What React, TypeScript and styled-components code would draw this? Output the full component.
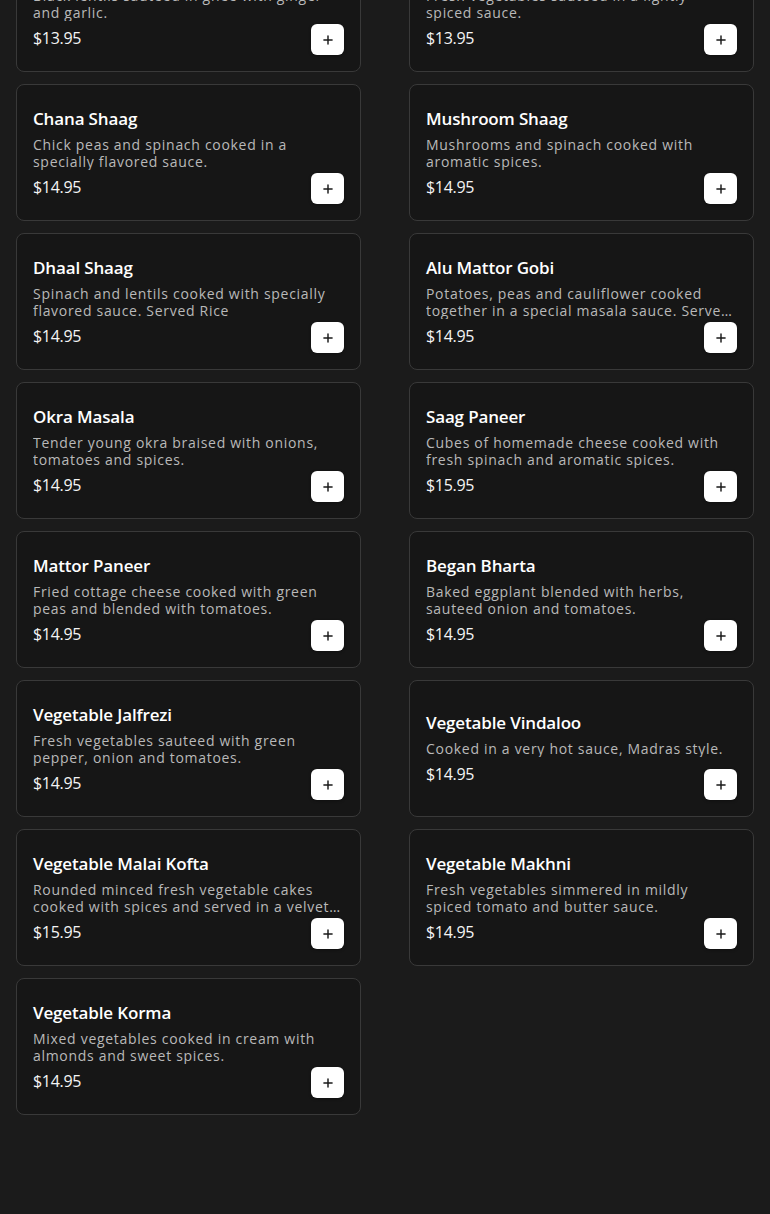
import React, { useLayoutEffect, useRef } from "react";
import styled, { createGlobalStyle } from "styled-components";
import { Plus } from "lucide-react";

const GlobalStyle = createGlobalStyle`
    * { box-sizing: border-box; }
    html, body { margin: 0; padding: 0; background: #1b1b1b; }
    body { font-family: "Open Sans", "Liberation Sans", sans-serif; color: #fff; }
`;

type Dish = { name: string; description: string; price: string };

const dishes: Dish[] = [
    { name: "Dhaal Makhni", description: "Black lentils sauteed in ghee with ginger and garlic.", price: "$13.95" },
    { name: "Mixed Vegetable Curry", description: "Fresh vegetables sauteed in a lightly spiced sauce.", price: "$13.95" },
    { name: "Chana Shaag", description: "Chick peas and spinach cooked in a specially flavored sauce.", price: "$14.95" },
    { name: "Mushroom Shaag", description: "Mushrooms and spinach cooked with aromatic spices.", price: "$14.95" },
    { name: "Dhaal Shaag", description: "Spinach and lentils cooked with specially flavored sauce. Served Rice", price: "$14.95" },
    { name: "Alu Mattor Gobi", description: "Potatoes, peas and cauliflower cooked together in a special masala sauce. Served with rice.", price: "$14.95" },
    { name: "Okra Masala", description: "Tender young okra braised with onions, tomatoes and spices.", price: "$14.95" },
    { name: "Saag Paneer", description: "Cubes of homemade cheese cooked with fresh spinach and aromatic spices.", price: "$15.95" },
    { name: "Mattor Paneer", description: "Fried cottage cheese cooked with green peas and blended with tomatoes.", price: "$14.95" },
    { name: "Began Bharta", description: "Baked eggplant blended with herbs, sauteed onion and tomatoes.", price: "$14.95" },
    { name: "Vegetable Jalfrezi", description: "Fresh vegetables sauteed with green pepper, onion and tomatoes.", price: "$14.95" },
    { name: "Vegetable Vindaloo", description: "Cooked in a very hot sauce, Madras style.", price: "$14.95" },
    { name: "Vegetable Malai Kofta", description: "Rounded minced fresh vegetable cakes cooked with spices and served in a velvety cream sauce.", price: "$15.95" },
    { name: "Vegetable Makhni", description: "Fresh vegetables simmered in mildly spiced tomato and butter sauce.", price: "$14.95" },
    { name: "Vegetable Korma", description: "Mixed vegetables cooked in cream with almonds and sweet spices.", price: "$14.95" },
];

// the menu is shown scrolled part way into the list
const SCROLL_INTO_GRID = 65;

const Viewport = styled.div`
    height: 100vh;
    overflow: hidden;
`;

const Section = styled.section`
    padding: 24px 16px 100px;
`;

const SectionTitle = styled.h2`
    margin: 0 0 20px;
    font-size: 24px;
    line-height: 32px;
    font-weight: 600;
`;

const Grid = styled.div`
    display: grid;
    grid-template-columns: 1fr 1fr;
    column-gap: 48px;
    row-gap: 12px;
`;

const Card = styled.div`
    display: grid;
    height: 137px;
    padding: 16px;
    background: #161616;
    border: 1px solid #393939;
    border-radius: 8px;
`;

const Info = styled.div`
    grid-area: 1 / 1;
    align-self: center;
    display: flex;
    flex-direction: column;
`;

const Name = styled.h3`
    margin: 0 0 7px;
    font-size: 17px;
    line-height: 20px;
    font-weight: 600;
    letter-spacing: -0.15px;
    color: #fff;
`;

const Description = styled.p`
    margin: 0 0 7px;
    font-size: 14px;
    line-height: 17px;
    font-weight: 400;
    letter-spacing: 0.7px;
    color: #b9b9b9;
    display: -webkit-box;
    -webkit-line-clamp: 2;
    -webkit-box-orient: vertical;
    overflow: hidden;
`;

const Price = styled.span`
    font-size: 16px;
    line-height: 20px;
    letter-spacing: -0.3px;
    color: #f4f4f4;
`;

const AddButton = styled.button`
    grid-area: 1 / 1;
    align-self: end;
    justify-self: end;
    width: 33px;
    height: 31px;
    display: flex;
    align-items: center;
    justify-content: center;
    padding: 0;
    border: none;
    border-radius: 6px;
    background: #fff;
    color: #1a1a1a;
    box-shadow: 0 1px 3px rgba(0, 0, 0, 0.35);
    cursor: pointer;
`;

export default function App() {
    const viewRef = useRef<HTMLDivElement>(null);
    const gridRef = useRef<HTMLDivElement>(null);

    useLayoutEffect(() => {
        if (viewRef.current && gridRef.current) {
            viewRef.current.scrollTop = gridRef.current.offsetTop + SCROLL_INTO_GRID;
        }
    }, []);

    return (
        <>
            <GlobalStyle />
            <Viewport ref={viewRef}>
                <Section>
                    <SectionTitle>Vegetarian Specialties</SectionTitle>
                    <Grid ref={gridRef}>
                        {dishes.map((dish) => (
                            <Card key={dish.name}>
                                <Info>
                                    <Name>{dish.name}</Name>
                                    <Description>{dish.description}</Description>
                                    <Price>{dish.price}</Price>
                                </Info>
                                <AddButton aria-label={`Add ${dish.name}`}>
                                    <Plus size={14} strokeWidth={2.5} />
                                </AddButton>
                            </Card>
                        ))}
                    </Grid>
                </Section>
            </Viewport>
        </>
    );
}
